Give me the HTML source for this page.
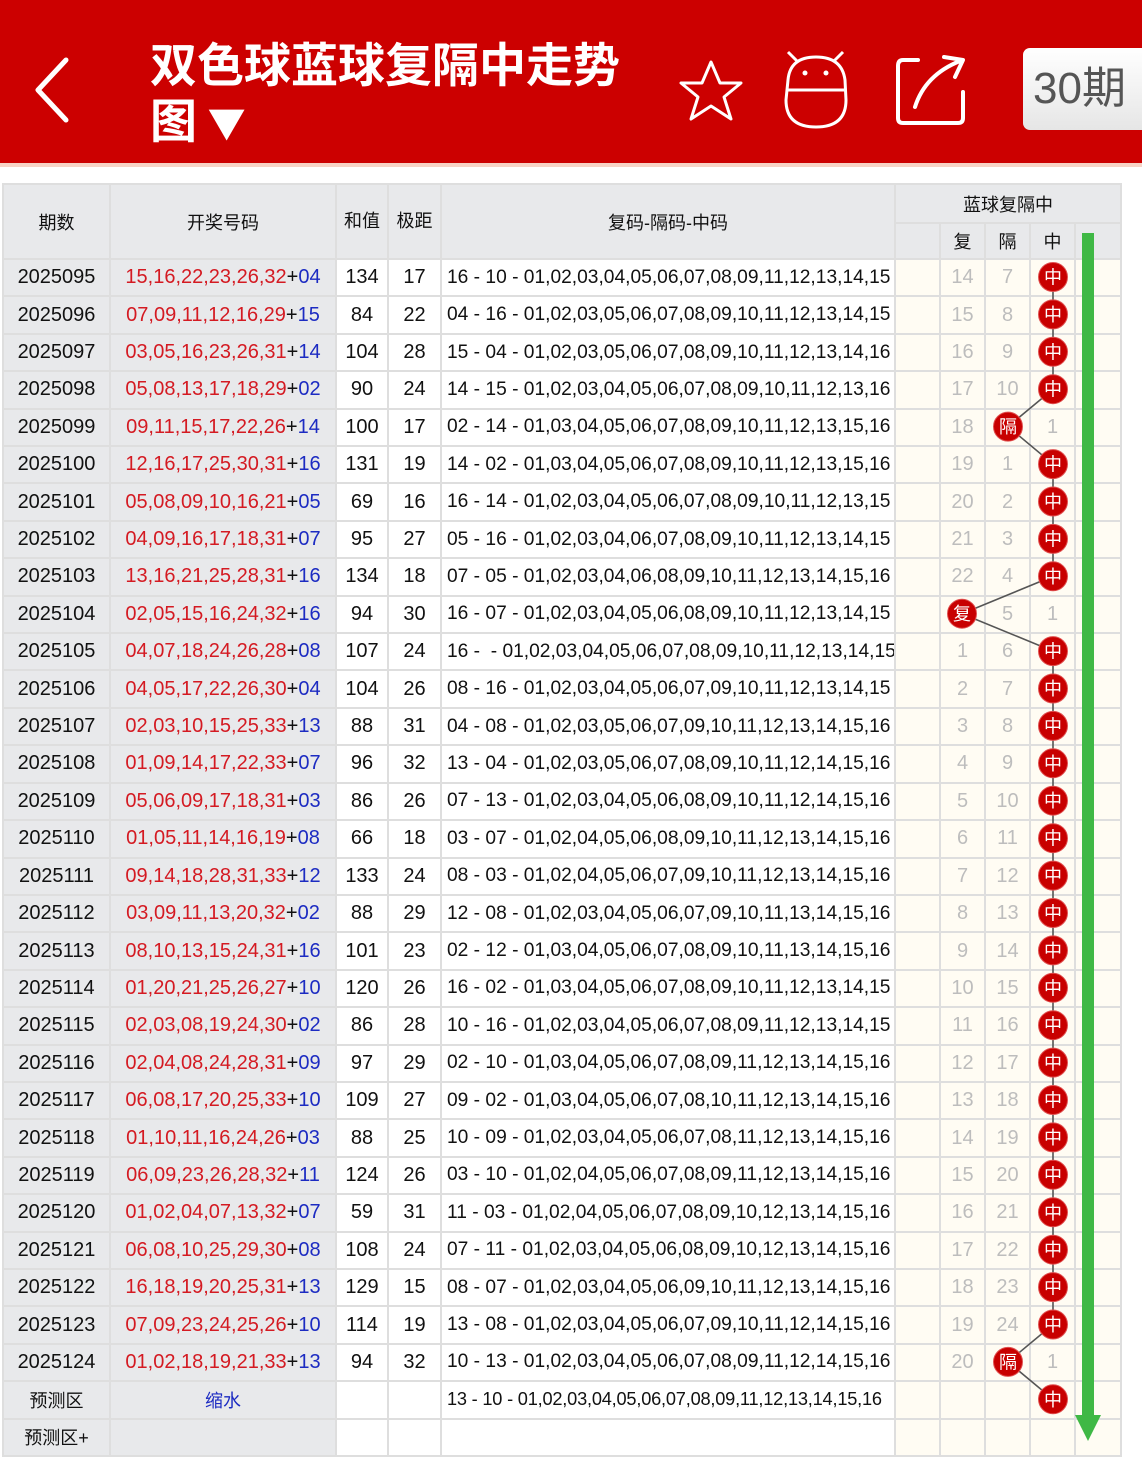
<!DOCTYPE html>
<html><head><meta charset="utf-8"><style>
*{margin:0;padding:0;box-sizing:border-box}
body{width:1142px;height:1448px;overflow:hidden;background:#fff;font-family:"Liberation Sans","Noto Sans CJK SC",sans-serif;position:relative}
.hdr{position:absolute;left:0;top:0;width:1142px;height:163px;background:#cc0000}
.pink{position:absolute;left:0;top:163px;width:1142px;height:4px;background:#f7d3c6}
.title{position:absolute;left:150px;top:34px;color:#fff;font-size:47px;font-weight:bold;line-height:56px;font-family:"Noto Sans CJK SC",sans-serif}
.btn{position:absolute;left:1023px;top:48px;width:130px;height:82px;border-radius:7px;background:linear-gradient(#fff,#e6e6e6);color:#555;font-size:44px;line-height:82px;padding-left:10px}
table{position:absolute;left:2px;top:183px;width:1118px;border-collapse:collapse;table-layout:fixed;font-size:20px}
td{border:2px solid #dedede;text-align:center;white-space:nowrap;overflow:hidden;color:#111;padding:0}
tr.d td{height:37.41px}
.g{background:#e8e9eb}
.w{background:#fff}
.c{background:#fffcf3}
.fm{border-left:2px solid #9a3b3b;text-align:left;padding-left:5px;font-size:19.2px}
.r{color:#d41a22}.b{color:#1c2bc2}
.n{color:#bdbdbd}
</style></head><body>
<div class="hdr"></div><div class="pink"></div>
<svg style="position:absolute;left:0;top:0" width="1142" height="163">
<polyline points="66,60 38,90 66,120" fill="none" stroke="#fff" stroke-width="5" stroke-linecap="round" stroke-linejoin="round"/>
<polygon points="711,62 720,83 741,83 724,97 731,119 711,106 691,119 698,97 681,83 702,83" fill="none" stroke="#fff" stroke-width="3" stroke-linejoin="round"/>
<path d="M788,80 Q790,57 816,57 Q842,57 845,80 L846,100 Q846,127 816,127 Q786,127 786,100 Z" fill="none" stroke="#fff" stroke-width="3"/>
<line x1="787" y1="90" x2="846" y2="90" stroke="#fff" stroke-width="3"/>
<line x1="788" y1="52" x2="797" y2="61" stroke="#fff" stroke-width="3"/>
<line x1="843" y1="52" x2="834" y2="61" stroke="#fff" stroke-width="3"/>
<circle cx="805" cy="73" r="2.5" fill="#fff"/><circle cx="826" cy="73" r="2.5" fill="#fff"/>
<path d="M918,60 L903,60 Q898,60 898,66 L898,118 Q898,123 903,123 L958,123 Q963,123 963,118 L963,92" fill="none" stroke="#fff" stroke-width="4" stroke-linecap="round"/>
<path d="M915,107 Q925,75 960,61" fill="none" stroke="#fff" stroke-width="4" stroke-linecap="round"/>
<path d="M944,57 L963,60 L955,77" fill="none" stroke="#fff" stroke-width="4" stroke-linecap="round" stroke-linejoin="round"/>
</svg>
<div class="title">双色球蓝球复隔中走势<br>图 <span style="font-size:38px">▼</span></div>
<div class="btn">30期</div>
<table>
<colgroup><col style="width:107px"><col style="width:226px"><col style="width:52px"><col style="width:53px"><col style="width:454px"><col style="width:45px"><col style="width:45px"><col style="width:45px"><col style="width:45px"><col style="width:46px"></colgroup>
<tr style="height:39px"><td class="g" rowspan="2" style="font-size:18px">期数</td><td class="g" rowspan="2" style="font-size:18px">开奖号码</td><td class="g" rowspan="2" style="font-size:18px;vertical-align:top;padding-top:22px">和值</td><td class="g" rowspan="2" style="font-size:18px;vertical-align:top;padding-top:22px">极距</td><td class="g" rowspan="2" style="font-size:18px">复码-隔码-中码</td><td class="g" colspan="5" style="font-size:18px">蓝球复隔中</td></tr>
<tr style="height:36px"><td class="g"></td><td class="g" style="font-size:18px">复</td><td class="g" style="font-size:18px">隔</td><td class="g" style="font-size:18px">中</td><td class="g"></td></tr>
<tr class="d"><td class="g">2025095</td><td class="g"><span class="r">15,16,22,23,26,32</span>+<span class="b">04</span></td><td class="w">134</td><td class="w">17</td><td class="w fm">16 - 10 - 01,02,03,04,05,06,07,08,09,11,12,13,14,15</td><td class="c"></td><td class="c n">14</td><td class="c n">7</td><td class="c"></td><td class="c"></td></tr>
<tr class="d"><td class="g">2025096</td><td class="g"><span class="r">07,09,11,12,16,29</span>+<span class="b">15</span></td><td class="w">84</td><td class="w">22</td><td class="w fm">04 - 16 - 01,02,03,05,06,07,08,09,10,11,12,13,14,15</td><td class="c"></td><td class="c n">15</td><td class="c n">8</td><td class="c"></td><td class="c"></td></tr>
<tr class="d"><td class="g">2025097</td><td class="g"><span class="r">03,05,16,23,26,31</span>+<span class="b">14</span></td><td class="w">104</td><td class="w">28</td><td class="w fm">15 - 04 - 01,02,03,05,06,07,08,09,10,11,12,13,14,16</td><td class="c"></td><td class="c n">16</td><td class="c n">9</td><td class="c"></td><td class="c"></td></tr>
<tr class="d"><td class="g">2025098</td><td class="g"><span class="r">05,08,13,17,18,29</span>+<span class="b">02</span></td><td class="w">90</td><td class="w">24</td><td class="w fm">14 - 15 - 01,02,03,04,05,06,07,08,09,10,11,12,13,16</td><td class="c"></td><td class="c n">17</td><td class="c n">10</td><td class="c"></td><td class="c"></td></tr>
<tr class="d"><td class="g">2025099</td><td class="g"><span class="r">09,11,15,17,22,26</span>+<span class="b">14</span></td><td class="w">100</td><td class="w">17</td><td class="w fm">02 - 14 - 01,03,04,05,06,07,08,09,10,11,12,13,15,16</td><td class="c"></td><td class="c n">18</td><td class="c"></td><td class="c n">1</td><td class="c"></td></tr>
<tr class="d"><td class="g">2025100</td><td class="g"><span class="r">12,16,17,25,30,31</span>+<span class="b">16</span></td><td class="w">131</td><td class="w">19</td><td class="w fm">14 - 02 - 01,03,04,05,06,07,08,09,10,11,12,13,15,16</td><td class="c"></td><td class="c n">19</td><td class="c n">1</td><td class="c"></td><td class="c"></td></tr>
<tr class="d"><td class="g">2025101</td><td class="g"><span class="r">05,08,09,10,16,21</span>+<span class="b">05</span></td><td class="w">69</td><td class="w">16</td><td class="w fm">16 - 14 - 01,02,03,04,05,06,07,08,09,10,11,12,13,15</td><td class="c"></td><td class="c n">20</td><td class="c n">2</td><td class="c"></td><td class="c"></td></tr>
<tr class="d"><td class="g">2025102</td><td class="g"><span class="r">04,09,16,17,18,31</span>+<span class="b">07</span></td><td class="w">95</td><td class="w">27</td><td class="w fm">05 - 16 - 01,02,03,04,06,07,08,09,10,11,12,13,14,15</td><td class="c"></td><td class="c n">21</td><td class="c n">3</td><td class="c"></td><td class="c"></td></tr>
<tr class="d"><td class="g">2025103</td><td class="g"><span class="r">13,16,21,25,28,31</span>+<span class="b">16</span></td><td class="w">134</td><td class="w">18</td><td class="w fm">07 - 05 - 01,02,03,04,06,08,09,10,11,12,13,14,15,16</td><td class="c"></td><td class="c n">22</td><td class="c n">4</td><td class="c"></td><td class="c"></td></tr>
<tr class="d"><td class="g">2025104</td><td class="g"><span class="r">02,05,15,16,24,32</span>+<span class="b">16</span></td><td class="w">94</td><td class="w">30</td><td class="w fm">16 - 07 - 01,02,03,04,05,06,08,09,10,11,12,13,14,15</td><td class="c"></td><td class="c"></td><td class="c n">5</td><td class="c n">1</td><td class="c"></td></tr>
<tr class="d"><td class="g">2025105</td><td class="g"><span class="r">04,07,18,24,26,28</span>+<span class="b">08</span></td><td class="w">107</td><td class="w">24</td><td class="w fm">16 - &nbsp;- 01,02,03,04,05,06,07,08,09,10,11,12,13,14,15</td><td class="c"></td><td class="c n">1</td><td class="c n">6</td><td class="c"></td><td class="c"></td></tr>
<tr class="d"><td class="g">2025106</td><td class="g"><span class="r">04,05,17,22,26,30</span>+<span class="b">04</span></td><td class="w">104</td><td class="w">26</td><td class="w fm">08 - 16 - 01,02,03,04,05,06,07,09,10,11,12,13,14,15</td><td class="c"></td><td class="c n">2</td><td class="c n">7</td><td class="c"></td><td class="c"></td></tr>
<tr class="d"><td class="g">2025107</td><td class="g"><span class="r">02,03,10,15,25,33</span>+<span class="b">13</span></td><td class="w">88</td><td class="w">31</td><td class="w fm">04 - 08 - 01,02,03,05,06,07,09,10,11,12,13,14,15,16</td><td class="c"></td><td class="c n">3</td><td class="c n">8</td><td class="c"></td><td class="c"></td></tr>
<tr class="d"><td class="g">2025108</td><td class="g"><span class="r">01,09,14,17,22,33</span>+<span class="b">07</span></td><td class="w">96</td><td class="w">32</td><td class="w fm">13 - 04 - 01,02,03,05,06,07,08,09,10,11,12,14,15,16</td><td class="c"></td><td class="c n">4</td><td class="c n">9</td><td class="c"></td><td class="c"></td></tr>
<tr class="d"><td class="g">2025109</td><td class="g"><span class="r">05,06,09,17,18,31</span>+<span class="b">03</span></td><td class="w">86</td><td class="w">26</td><td class="w fm">07 - 13 - 01,02,03,04,05,06,08,09,10,11,12,14,15,16</td><td class="c"></td><td class="c n">5</td><td class="c n">10</td><td class="c"></td><td class="c"></td></tr>
<tr class="d"><td class="g">2025110</td><td class="g"><span class="r">01,05,11,14,16,19</span>+<span class="b">08</span></td><td class="w">66</td><td class="w">18</td><td class="w fm">03 - 07 - 01,02,04,05,06,08,09,10,11,12,13,14,15,16</td><td class="c"></td><td class="c n">6</td><td class="c n">11</td><td class="c"></td><td class="c"></td></tr>
<tr class="d"><td class="g">2025111</td><td class="g"><span class="r">09,14,18,28,31,33</span>+<span class="b">12</span></td><td class="w">133</td><td class="w">24</td><td class="w fm">08 - 03 - 01,02,04,05,06,07,09,10,11,12,13,14,15,16</td><td class="c"></td><td class="c n">7</td><td class="c n">12</td><td class="c"></td><td class="c"></td></tr>
<tr class="d"><td class="g">2025112</td><td class="g"><span class="r">03,09,11,13,20,32</span>+<span class="b">02</span></td><td class="w">88</td><td class="w">29</td><td class="w fm">12 - 08 - 01,02,03,04,05,06,07,09,10,11,13,14,15,16</td><td class="c"></td><td class="c n">8</td><td class="c n">13</td><td class="c"></td><td class="c"></td></tr>
<tr class="d"><td class="g">2025113</td><td class="g"><span class="r">08,10,13,15,24,31</span>+<span class="b">16</span></td><td class="w">101</td><td class="w">23</td><td class="w fm">02 - 12 - 01,03,04,05,06,07,08,09,10,11,13,14,15,16</td><td class="c"></td><td class="c n">9</td><td class="c n">14</td><td class="c"></td><td class="c"></td></tr>
<tr class="d"><td class="g">2025114</td><td class="g"><span class="r">01,20,21,25,26,27</span>+<span class="b">10</span></td><td class="w">120</td><td class="w">26</td><td class="w fm">16 - 02 - 01,03,04,05,06,07,08,09,10,11,12,13,14,15</td><td class="c"></td><td class="c n">10</td><td class="c n">15</td><td class="c"></td><td class="c"></td></tr>
<tr class="d"><td class="g">2025115</td><td class="g"><span class="r">02,03,08,19,24,30</span>+<span class="b">02</span></td><td class="w">86</td><td class="w">28</td><td class="w fm">10 - 16 - 01,02,03,04,05,06,07,08,09,11,12,13,14,15</td><td class="c"></td><td class="c n">11</td><td class="c n">16</td><td class="c"></td><td class="c"></td></tr>
<tr class="d"><td class="g">2025116</td><td class="g"><span class="r">02,04,08,24,28,31</span>+<span class="b">09</span></td><td class="w">97</td><td class="w">29</td><td class="w fm">02 - 10 - 01,03,04,05,06,07,08,09,11,12,13,14,15,16</td><td class="c"></td><td class="c n">12</td><td class="c n">17</td><td class="c"></td><td class="c"></td></tr>
<tr class="d"><td class="g">2025117</td><td class="g"><span class="r">06,08,17,20,25,33</span>+<span class="b">10</span></td><td class="w">109</td><td class="w">27</td><td class="w fm">09 - 02 - 01,03,04,05,06,07,08,10,11,12,13,14,15,16</td><td class="c"></td><td class="c n">13</td><td class="c n">18</td><td class="c"></td><td class="c"></td></tr>
<tr class="d"><td class="g">2025118</td><td class="g"><span class="r">01,10,11,16,24,26</span>+<span class="b">03</span></td><td class="w">88</td><td class="w">25</td><td class="w fm">10 - 09 - 01,02,03,04,05,06,07,08,11,12,13,14,15,16</td><td class="c"></td><td class="c n">14</td><td class="c n">19</td><td class="c"></td><td class="c"></td></tr>
<tr class="d"><td class="g">2025119</td><td class="g"><span class="r">06,09,23,26,28,32</span>+<span class="b">11</span></td><td class="w">124</td><td class="w">26</td><td class="w fm">03 - 10 - 01,02,04,05,06,07,08,09,11,12,13,14,15,16</td><td class="c"></td><td class="c n">15</td><td class="c n">20</td><td class="c"></td><td class="c"></td></tr>
<tr class="d"><td class="g">2025120</td><td class="g"><span class="r">01,02,04,07,13,32</span>+<span class="b">07</span></td><td class="w">59</td><td class="w">31</td><td class="w fm">11 - 03 - 01,02,04,05,06,07,08,09,10,12,13,14,15,16</td><td class="c"></td><td class="c n">16</td><td class="c n">21</td><td class="c"></td><td class="c"></td></tr>
<tr class="d"><td class="g">2025121</td><td class="g"><span class="r">06,08,10,25,29,30</span>+<span class="b">08</span></td><td class="w">108</td><td class="w">24</td><td class="w fm">07 - 11 - 01,02,03,04,05,06,08,09,10,12,13,14,15,16</td><td class="c"></td><td class="c n">17</td><td class="c n">22</td><td class="c"></td><td class="c"></td></tr>
<tr class="d"><td class="g">2025122</td><td class="g"><span class="r">16,18,19,20,25,31</span>+<span class="b">13</span></td><td class="w">129</td><td class="w">15</td><td class="w fm">08 - 07 - 01,02,03,04,05,06,09,10,11,12,13,14,15,16</td><td class="c"></td><td class="c n">18</td><td class="c n">23</td><td class="c"></td><td class="c"></td></tr>
<tr class="d"><td class="g">2025123</td><td class="g"><span class="r">07,09,23,24,25,26</span>+<span class="b">10</span></td><td class="w">114</td><td class="w">19</td><td class="w fm">13 - 08 - 01,02,03,04,05,06,07,09,10,11,12,14,15,16</td><td class="c"></td><td class="c n">19</td><td class="c n">24</td><td class="c"></td><td class="c"></td></tr>
<tr class="d"><td class="g">2025124</td><td class="g"><span class="r">01,02,18,19,21,33</span>+<span class="b">13</span></td><td class="w">94</td><td class="w">32</td><td class="w fm">10 - 13 - 01,02,03,04,05,06,07,08,09,11,12,14,15,16</td><td class="c"></td><td class="c n">20</td><td class="c"></td><td class="c n">1</td><td class="c"></td></tr>
<tr class="d"><td class="g" style="font-size:18px">预测区</td><td class="g b" style="font-size:18px">缩水</td><td class="w"></td><td class="w"></td><td class="w fm" style="font-size:18.2px;letter-spacing:-0.2px">13 - 10 - 01,02,03,04,05,06,07,08,09,11,12,13,14,15,16</td><td class="c"></td><td class="c"></td><td class="c"></td><td class="c"></td><td class="c"></td></tr>
<tr class="d"><td class="g" style="font-size:18px">预测区+</td><td class="g"></td><td class="w"></td><td class="w"></td><td class="w fm"></td><td class="c"></td><td class="c"></td><td class="c"></td><td class="c"></td><td class="c"></td></tr>
</table>
<svg style="position:absolute;left:0;top:0" width="1142" height="1448">
<rect x="1082" y="233" width="12" height="1184" fill="#3fb845"/>
<polygon points="1075,1415 1101,1415 1088,1441" fill="#3fb845"/>
<polyline fill="none" stroke="#555" stroke-width="1.6" points="1053,277 1053,314.4 1053,351.8 1053,389.2 1008,426.6 1053,464.1 1053,501.5 1053,538.9 1053,576.3 962,613.7 1053,651.1 1053,688.5 1053,725.9 1053,763.3 1053,800.7 1053,838.2 1053,875.6 1053,913 1053,950.4 1053,987.8 1053,1025.2 1053,1062.6 1053,1100 1053,1137.4 1053,1174.8 1053,1212.3 1053,1249.7 1053,1287.1 1053,1324.5 1008,1361.9 1053,1399.3"/>
<g fill="#c80000" stroke="#e05050" stroke-width="1">
<circle cx="1053" cy="277" r="14.5"/><circle cx="1053" cy="314.4" r="14.5"/><circle cx="1053" cy="351.8" r="14.5"/><circle cx="1053" cy="389.2" r="14.5"/><circle cx="1008" cy="426.6" r="14.5"/><circle cx="1053" cy="464.1" r="14.5"/><circle cx="1053" cy="501.5" r="14.5"/><circle cx="1053" cy="538.9" r="14.5"/><circle cx="1053" cy="576.3" r="14.5"/><circle cx="962" cy="613.7" r="14.5"/><circle cx="1053" cy="651.1" r="14.5"/><circle cx="1053" cy="688.5" r="14.5"/><circle cx="1053" cy="725.9" r="14.5"/><circle cx="1053" cy="763.3" r="14.5"/><circle cx="1053" cy="800.7" r="14.5"/><circle cx="1053" cy="838.2" r="14.5"/><circle cx="1053" cy="875.6" r="14.5"/><circle cx="1053" cy="913" r="14.5"/><circle cx="1053" cy="950.4" r="14.5"/><circle cx="1053" cy="987.8" r="14.5"/><circle cx="1053" cy="1025.2" r="14.5"/><circle cx="1053" cy="1062.6" r="14.5"/><circle cx="1053" cy="1100" r="14.5"/><circle cx="1053" cy="1137.4" r="14.5"/><circle cx="1053" cy="1174.8" r="14.5"/><circle cx="1053" cy="1212.3" r="14.5"/><circle cx="1053" cy="1249.7" r="14.5"/><circle cx="1053" cy="1287.1" r="14.5"/><circle cx="1053" cy="1324.5" r="14.5"/><circle cx="1008" cy="1361.9" r="14.5"/><circle cx="1053" cy="1399.3" r="14.5"/>
</g>
<g fill="#fff" font-size="18" text-anchor="middle" font-family="Noto Sans CJK SC, sans-serif">
<text x="1053" y="283.5">中</text><text x="1053" y="320.9">中</text><text x="1053" y="358.3">中</text><text x="1053" y="395.7">中</text><text x="1008" y="433.1">隔</text><text x="1053" y="470.6">中</text><text x="1053" y="508">中</text><text x="1053" y="545.4">中</text><text x="1053" y="582.8">中</text><text x="962" y="620.2">复</text><text x="1053" y="657.6">中</text><text x="1053" y="695">中</text><text x="1053" y="732.4">中</text><text x="1053" y="769.8">中</text><text x="1053" y="807.2">中</text><text x="1053" y="844.7">中</text><text x="1053" y="882.1">中</text><text x="1053" y="919.5">中</text><text x="1053" y="956.9">中</text><text x="1053" y="994.3">中</text><text x="1053" y="1031.7">中</text><text x="1053" y="1069.1">中</text><text x="1053" y="1106.5">中</text><text x="1053" y="1143.9">中</text><text x="1053" y="1181.3">中</text><text x="1053" y="1218.8">中</text><text x="1053" y="1256.2">中</text><text x="1053" y="1293.6">中</text><text x="1053" y="1331">中</text><text x="1008" y="1368.4">隔</text><text x="1053" y="1405.8">中</text>
</g>
</svg>
</body></html>
